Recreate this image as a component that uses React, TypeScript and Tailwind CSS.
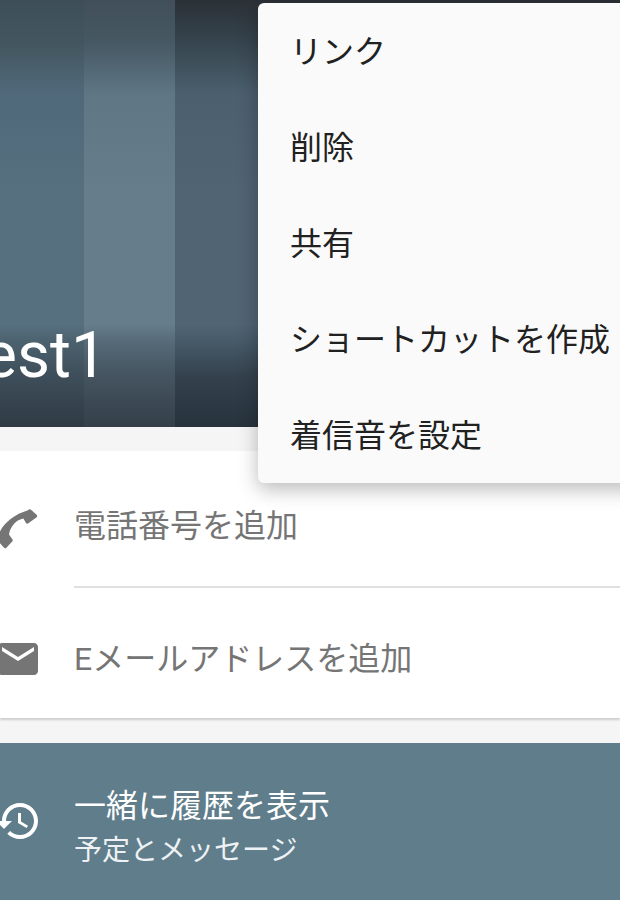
import { ReactNode } from "react";

const menuItems = ["リンク", "削除", "共有", "ショートカットを作成", "着信音を設定"];

const stripes = [
  "w-[84px] bg-[linear-gradient(180deg,#3d4e59_0%,#43565f_10%,#50697a_22%,#567080_45%,#567080_76%,#4c616e_80%,#3e4e5a_88%,#2f3a44_100%)]",
  "w-[91px] bg-[linear-gradient(180deg,#414f59_0%,#465863_10%,#5f7685_22%,#667d8b_45%,#667d8b_76%,#566a78_80%,#445460_88%,#343f49_100%)]",
  "flex-1 bg-[linear-gradient(180deg,#2b3036_0%,#36454f_10%,#4b5f6e_22%,#506473_45%,#506473_76%,#465a68_80%,#34424e_88%,#27323c_100%)]",
];

function PhoneIcon() {
  return (
    <svg viewBox="0 -2 48 48" className="w-12 h-12 fill-[#757575]">
      <path d="M33 6.2Q34.8 4.6 36.3 6L41.6 10.8Q43 12.2 41.4 13.6L33 19.6Q31.8 20.2 31 19L28.4 14.6C21.5 15.8 15.5 22 14 30.4L17.5 35.4Q18.2 36.6 17.2 37.6L11.4 43.8Q10 45 8.8 43.6L3.6 37.6Q2.6 36.4 2.8 35C4.5 22 17 11 33 6.2Z" />
    </svg>
  );
}

function MailIcon() {
  return (
    <svg viewBox="0 0 24 24" className="w-12 h-12 -ml-[1px] fill-[#757575]">
      <path d="M20 4H4c-1.1 0-1.99.9-1.99 2L2 18c0 1.1.9 2 2 2h16c1.1 0 2-.9 2-2V6c0-1.1-.9-2-2-2zm0 4l-8 5-8-5V6l8 5 8-5v2z" />
    </svg>
  );
}

function HistoryIcon() {
  return (
    <svg viewBox="0 0 24 24" className="w-12 h-12 fill-white">
      <path d="M13 3c-4.97 0-9 4.03-9 9H1l3.89 3.89.07.14L9 12H6c0-3.87 3.13-7 7-7s7 3.13 7 7-3.13 7-7 7c-1.93 0-3.68-.79-4.94-2.06l-1.42 1.42C8.27 19.99 10.51 21 13 21c4.97 0 9-4.03 9-9s-4.03-9-9-9zm-1 5v5l4.28 2.54.72-1.21-3.5-2.08V8H12z" />
    </svg>
  );
}

function Row({ icon, label, className }: { icon: ReactNode; label: string; className: string }) {
  return (
    <div className={`flex items-center ${className}`}>
      <div className="w-[75px] shrink-0 -ml-[5px]">{icon}</div>
      <span className="ml-[4px] text-[32px] leading-[44px] text-[#757575]">{label}</span>
    </div>
  );
}

export default function App() {
  return (
    <div className="relative h-[900px] w-[620px] overflow-hidden bg-[#f5f5f5] font-['Roboto','Noto_Sans_CJK_JP',sans-serif]">
      {/* Header */}
      <div className="relative flex h-[427px]">
        {stripes.map((s) => (
          <div key={s} className={s} />
        ))}
        <span className="absolute -left-[52px] top-[311px] text-[64px] leading-[90px] text-white">Test1</span>
      </div>

      {/* Contact card */}
      <div className="mt-[24px] h-[267px] bg-white shadow-[0_2px_2px_rgba(0,0,0,0.16)]">
        <Row icon={<PhoneIcon />} label="電話番号を追加" className="h-[135px] pt-[14px]" />
        <div className="ml-[74px] h-[2px] bg-[#e0e0e0]" />
        <Row icon={<MailIcon />} label="Eメールアドレスを追加" className="h-[130px] pt-[11px]" />
      </div>

      {/* History */}
      <div className="mt-[25px] flex h-[157px] items-start bg-[#607d8b] pt-[39px] text-white">
        <div className="mt-[15px] w-[80px] shrink-0 -ml-[6px]">
          <HistoryIcon />
        </div>
        <div>
          <div className="text-[32px] leading-[48px]">一緒に履歴を表示</div>
          <div className="mt-[1px] text-[28px] leading-[40px] text-[#eef2f4]">予定とメッセージ</div>
        </div>
      </div>

      {/* Overflow menu */}
      <div className="absolute left-[258px] top-[3px] w-[400px] rounded-[6px] bg-[#fafafa] shadow-[0_6px_20px_rgba(0,0,0,0.28)]">
        {menuItems.map((item) => (
          <div key={item} className="flex h-[96px] items-center pl-[32px] pt-[2px] text-[32px] text-[#212121]">
            {item}
          </div>
        ))}
      </div>
    </div>
  );
}
